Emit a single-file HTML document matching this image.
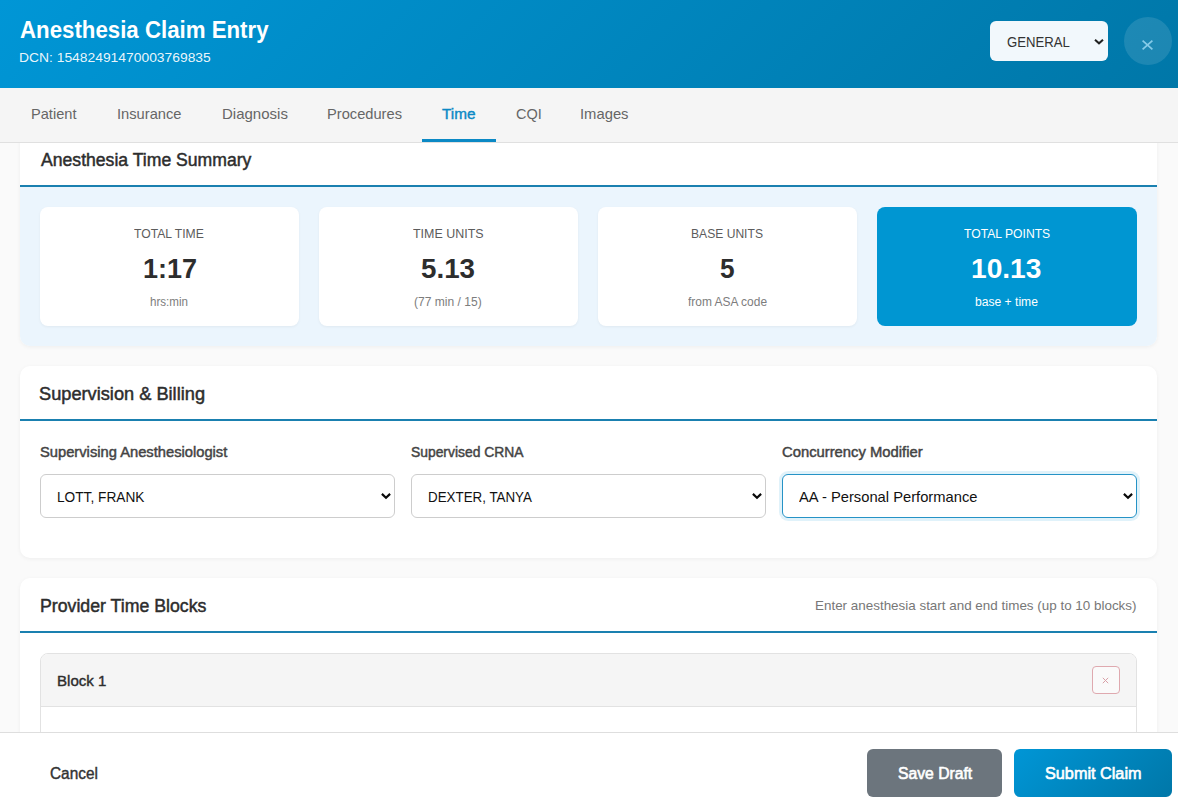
<!DOCTYPE html>
<html>
<head>
<meta charset="utf-8">
<title>Anesthesia Claim Entry</title>
<style>
*{box-sizing:border-box;margin:0;padding:0}
html,body{width:1178px;height:802px;overflow:hidden;background:#fafafa;font-family:"Liberation Sans",sans-serif;color:#2d2d2d}
.abs{position:absolute}
.t{position:absolute;white-space:nowrap;line-height:1;transform-origin:0 0}
#hdr{left:0;top:0;width:1178px;height:88px;background:linear-gradient(135deg,#0096d6 0%,#0077a8 100%)}
#proto{left:990px;top:21px;width:118px;height:40px;background:#f2f8fc;border-radius:6px}
#closec{left:1124px;top:17px;width:48px;height:48px;border-radius:50%;background:rgba(255,255,255,0.115)}
#tabs{left:0;top:88px;width:1178px;height:55px;background:#f5f5f5;border-bottom:1px solid #e0e0e0}
#tabact{left:422px;top:139px;width:74px;height:3px;background:#0b89c5}
.card{position:absolute;left:20px;width:1137px;background:#fff;border-radius:10px;box-shadow:0 1px 4px rgba(0,0,0,0.05)}
.cline{position:absolute;left:0;width:1137px;height:2px;background:#1a80b0}
.stat{position:absolute;top:207px;height:119px;background:#fff;border-radius:8px;box-shadow:0 1px 3px rgba(0,0,0,0.05)}
.sel{position:absolute;top:474px;height:44px;width:355px;border:1px solid #cdcdcd;border-radius:6px;background:#fff}
.chev{position:absolute;width:12px;height:8px;overflow:visible}
#footer{left:0;top:732px;width:1178px;height:70px;background:#fff;border-top:1px solid #dedede}
</style>
</head>
<body>
<!-- content cards -->
<div class="card" id="card1" style="top:120px;height:226px;overflow:hidden">
  <div class="abs" id="c1body" style="left:0;top:67px;width:1137px;height:160px;background:#ebf5fd"></div>
  <div class="cline" id="c1line" style="top:65px"></div>
</div>
<div class="stat" id="s1" style="left:40px;width:259px"></div>
<div class="stat" id="s2" style="left:319px;width:259px"></div>
<div class="stat" id="s3" style="left:598px;width:259px"></div>
<div class="stat" id="s4" style="left:877px;width:260px;background:#0096d2;box-shadow:none"></div>

<div class="card" id="card2" style="top:366px;height:192px">
  <div class="cline" id="c2line" style="top:53px"></div>
</div>
<div class="sel" id="sel1" style="left:40px"></div>
<div class="sel" id="sel2" style="left:411px"></div>
<div class="sel" id="sel3" style="left:782px;border:1px solid #2693c6;box-shadow:0 0 0 3px rgba(0,150,214,0.12)"></div>
<svg class="chev" id="ch1" style="left:380px;top:492.3px" viewBox="0 0 12 8"><path d="M1.9 1.9 L6 5.7 L10.1 1.9" fill="none" stroke="#0a0a0a" stroke-width="2.2" stroke-linecap="butt" stroke-linejoin="miter"/></svg>
<svg class="chev" id="ch2" style="left:751px;top:492.3px" viewBox="0 0 12 8"><path d="M1.9 1.9 L6 5.7 L10.1 1.9" fill="none" stroke="#0a0a0a" stroke-width="2.2" stroke-linecap="butt" stroke-linejoin="miter"/></svg>
<svg class="chev" id="ch3" style="left:1122px;top:492.3px" viewBox="0 0 12 8"><path d="M1.9 1.9 L6 5.7 L10.1 1.9" fill="none" stroke="#0a0a0a" stroke-width="2.2" stroke-linecap="butt" stroke-linejoin="miter"/></svg>

<div class="card" id="card3" style="top:578px;height:300px">
  <div class="cline" id="c3line" style="top:53px"></div>
</div>
<div class="abs" id="blk" style="left:40px;top:653px;width:1097px;height:200px;border:1px solid #e2e2e2;border-radius:8px;background:#fff;overflow:hidden">
  <div class="abs" id="blkh" style="left:0;top:0;width:1097px;height:53px;background:#f5f5f5;border-bottom:1px solid #e2e2e2"></div>
</div>
<div class="abs" id="blkx" style="left:1092px;top:666px;width:28px;height:28px;border:1px solid #dfa9af;border-radius:4px;background:#fafafa"></div>
<svg class="abs" id="blkxi" style="left:1102px;top:677px;width:7px;height:7px;overflow:visible" viewBox="0 0 7 7"><path d="M0.8 0.8 L6.2 6.2 M6.2 0.8 L0.8 6.2" fill="none" stroke="#d9a0a7" stroke-width="1.0"/></svg>

<!-- header -->
<div class="abs" id="hdr"></div>
<div class="abs" id="proto"></div>
<svg class="chev" id="ch0" style="left:1093px;top:37.5px" viewBox="0 0 12 8"><path d="M2 1.7 L6 5.3 L10 1.7" fill="none" stroke="#222" stroke-width="2" stroke-linecap="butt" stroke-linejoin="miter"/></svg>
<div class="abs" id="closec"></div>
<svg class="abs" id="closex" style="left:1142px;top:39.6px;width:11px;height:10px;overflow:visible" viewBox="0 0 11 10"><path d="M0.6 0.6 L10.4 9.4 M10.4 0.6 L0.6 9.4" fill="none" stroke="rgba(175,228,252,0.72)" stroke-width="1.75"/></svg>

<!-- tabs -->
<div class="abs" id="tabs"></div>
<div class="abs" id="tabact"></div>

<!-- footer -->
<div class="abs" id="footer"></div>
<div class="abs" id="savebtn" style="left:867px;top:749px;width:135px;height:48px;border-radius:6px;background:#6c757d"></div>
<div class="abs" id="subbtn" style="left:1014px;top:749px;width:158px;height:48px;border-radius:6px;background:linear-gradient(135deg,#0096d6,#0077a8)"></div>

<div class="t" id="title" style="left:19.64px;top:18px;font-size:24px;color:#fff;font-weight:bold;transform:scaleX(0.9270);">Anesthesia Claim Entry</div>
<div class="t" id="dcn" style="left:19.27px;top:51px;font-size:13.6px;color:rgba(255,255,255,0.93);transform:scaleX(1.0188);">DCN: 15482491470003769835</div>
<div class="t" id="prototxt" style="left:1006.55px;top:34px;font-size:15px;color:#333;transform:scaleX(0.8772);">GENERAL</div>
<div class="t" id="tb1" style="left:31.44px;top:106px;font-size:15px;color:#666;transform:scaleX(0.9741);">Patient</div>
<div class="t" id="tb2" style="left:117.49px;top:106px;font-size:15px;color:#666;transform:scaleX(0.9789);">Insurance</div>
<div class="t" id="tb3" style="left:221.60px;top:106px;font-size:15px;color:#666;transform:scaleX(1.0002);">Diagnosis</div>
<div class="t" id="tb4" style="left:326.83px;top:106px;font-size:15px;color:#666;transform:scaleX(0.9774);">Procedures</div>
<div class="t" id="tb5" style="left:442.46px;top:106px;font-size:15px;color:#0b89c5;-webkit-text-stroke:0.39px #0b89c5;transform:scaleX(1.0227);">Time</div>
<div class="t" id="tb6" style="left:515.56px;top:106px;font-size:15px;color:#666;transform:scaleX(0.9668);">CQI</div>
<div class="t" id="tb7" style="left:580.38px;top:106px;font-size:15px;color:#666;transform:scaleX(0.9859);">Images</div>
<div class="t" id="c1title" style="left:40.55px;top:151px;font-size:18px;color:#2d2d2d;-webkit-text-stroke:0.47px #2d2d2d;transform:scaleX(0.9783);">Anesthesia Time Summary</div>
<div class="t" id="s1l" style="left:134.47px;top:228px;font-size:12.8px;color:#5c5c5c;transform:scaleX(0.9509);">TOTAL TIME</div>
<div class="t" id="s1v" style="left:142.53px;top:255px;font-size:28px;color:#2d2d2d;font-weight:bold;transform:scaleX(0.9658);">1:17</div>
<div class="t" id="s1s" style="left:150.24px;top:296px;font-size:12px;color:#7d7d7d;transform:scaleX(0.9661);">hrs:min</div>
<div class="t" id="s2l" style="left:413.06px;top:228px;font-size:12.8px;color:#5c5c5c;transform:scaleX(0.9737);">TIME UNITS</div>
<div class="t" id="s2v" style="left:421.09px;top:255px;font-size:28px;color:#2d2d2d;font-weight:bold;transform:scaleX(0.9906);">5.13</div>
<div class="t" id="s2s" style="left:414.26px;top:296px;font-size:12px;color:#7d7d7d;transform:scaleX(1.0048);">(77 min / 15)</div>
<div class="t" id="s3l" style="left:691.41px;top:228px;font-size:12.8px;color:#5c5c5c;transform:scaleX(0.9456);">BASE UNITS</div>
<div class="t" id="s3v" style="left:719.95px;top:255px;font-size:28px;color:#2d2d2d;font-weight:bold;transform:scaleX(0.9355);">5</div>
<div class="t" id="s3s" style="left:688.29px;top:296px;font-size:12px;color:#7d7d7d;transform:scaleX(0.9955);">from ASA code</div>
<div class="t" id="s4l" style="left:964.07px;top:228px;font-size:12.8px;color:#fff;transform:scaleX(0.9495);">TOTAL POINTS</div>
<div class="t" id="s4v" style="left:971.36px;top:255px;font-size:28px;color:#fff;font-weight:bold;transform:scaleX(1.0045);">10.13</div>
<div class="t" id="s4s" style="left:975.39px;top:296px;font-size:12px;color:#fff;transform:scaleX(1.0089);">base + time</div>
<div class="t" id="c2title" style="left:39.27px;top:385px;font-size:18px;color:#2d2d2d;-webkit-text-stroke:0.47px #2d2d2d;transform:scaleX(1.0118);">Supervision &amp; Billing</div>
<div class="t" id="l1" style="left:39.82px;top:445px;font-size:14px;color:#444;-webkit-text-stroke:0.45px #444;transform:scaleX(1.0510);">Supervising Anesthesiologist</div>
<div class="t" id="l2" style="left:411.35px;top:445px;font-size:14px;color:#444;-webkit-text-stroke:0.45px #444;transform:scaleX(0.9900);">Supervised CRNA</div>
<div class="t" id="l3" style="left:782.23px;top:445px;font-size:14px;color:#444;-webkit-text-stroke:0.45px #444;transform:scaleX(1.0566);">Concurrency Modifier</div>
<div class="t" id="st1" style="left:56.72px;top:489px;font-size:15px;color:#111;transform:scaleX(0.9120);">LOTT, FRANK</div>
<div class="t" id="st2" style="left:427.84px;top:489px;font-size:15px;color:#111;transform:scaleX(0.8909);">DEXTER, TANYA</div>
<div class="t" id="st3" style="left:799.19px;top:489px;font-size:15px;color:#111;transform:scaleX(0.9819);">AA - Personal Performance</div>
<div class="t" id="c3title" style="left:39.64px;top:597px;font-size:18px;color:#2d2d2d;-webkit-text-stroke:0.47px #2d2d2d;transform:scaleX(0.9842);">Provider Time Blocks</div>
<div class="t" id="c3hint" style="left:815.28px;top:599px;font-size:13px;color:#777;transform:scaleX(1.0322);">Enter anesthesia start and end times (up to 10 blocks)</div>
<div class="t" id="blkt" style="left:56.63px;top:673px;font-size:15px;color:#2d2d2d;-webkit-text-stroke:0.39px #2d2d2d;transform:scaleX(1.0047);">Block 1</div>
<div class="t" id="cancel" style="left:49.62px;top:766px;font-size:16px;color:#333;-webkit-text-stroke:0.42px #333;transform:scaleX(0.9612);">Cancel</div>
<div class="t" id="savet" style="left:897.78px;top:766px;font-size:16px;color:#fff;-webkit-text-stroke:0.6px #fff;transform:scaleX(0.9811);">Save Draft</div>
<div class="t" id="subt" style="left:1044.86px;top:766px;font-size:16px;color:#fff;-webkit-text-stroke:0.6px #fff;transform:scaleX(1.0145);">Submit Claim</div>
</body>
</html>
